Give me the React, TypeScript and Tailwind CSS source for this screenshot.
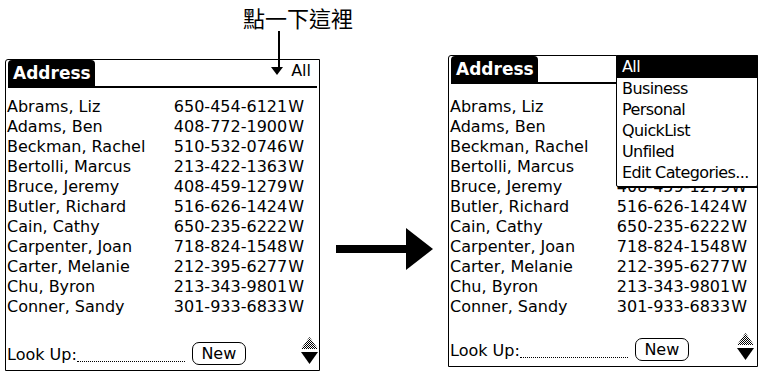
import React from 'react';

const contacts = [
  ['Abrams, Liz', '650-454-6121'],
  ['Adams, Ben', '408-772-1900'],
  ['Beckman, Rachel', '510-532-0746'],
  ['Bertolli, Marcus', '213-422-1363'],
  ['Bruce, Jeremy', '408-459-1279'],
  ['Butler, Richard', '516-626-1424'],
  ['Cain, Cathy', '650-235-6222'],
  ['Carpenter, Joan', '718-824-1548'],
  ['Carter, Melanie', '212-395-6277'],
  ['Chu, Byron', '213-343-9801'],
  ['Conner, Sandy', '301-933-6833'],
];

const categories = ['Business', 'Personal', 'QuickList', 'Unfiled', 'Edit Categories...'];

// up arrow greyed out (dithered), down arrow active
const ScrollArrows = ({ id }: { id: string }) => (
  <svg width="17" height="28" viewBox="0 0 17 28">
    <defs>
      <pattern id={id} width="2" height="2" patternUnits="userSpaceOnUse">
        <rect x="0" y="0" width="1" height="1" fill="#000" />
        <rect x="1" y="1" width="1" height="1" fill="#000" />
      </pattern>
    </defs>
    <polygon points="8.5,0 17,12 0,12" fill={`url(#${id})`} />
    <polygon points="0,15 17,15 8.5,27" fill="#000" />
  </svg>
);

type ScreenProps = {
  popup?: boolean;
  className: string;
  listPad: string;
  phonePad: string;
  footPad: string;
};

const Screen = ({ popup = false, className, listPad, phonePad, footPad }: ScreenProps) => (
  <div className={`relative flex flex-col h-[312px] shrink-0 border border-black rounded-tl-[3px] ${className}`}>
    {/* Title bar */}
    <div className="flex items-end h-[26px] px-[2px]">
      <div className="h-full w-[87px] bg-black rounded-t-[4px] pl-[5px] pt-[3px] text-white font-bold text-[17px] leading-[20px]">
        Address
      </div>
      {!popup && (
        <div className="ml-auto flex items-center gap-[8px] pr-[6px] pb-[6px]">
          <svg width="12" height="8" viewBox="0 0 12 8">
            <polygon points="0,0 12,0 6,8" fill="#000" />
          </svg>
          <span className="text-[16px] leading-[18px]">All</span>
        </div>
      )}
    </div>
    <div className="h-[2px] bg-black mx-[2px]" />

    {/* List */}
    <div className={`flex flex-col ${listPad}`}>
      {contacts.map(([name, phone], i) => (
        <div key={name} className={`flex justify-between h-[20px] leading-[20px] text-[16px] pl-[1px] ${phonePad}`}>
          <span>{name}</span>
          <span className={popup && i < 4 ? 'invisible' : ''}>
            {phone}
            <span className="ml-[1px]">W</span>
          </span>
        </div>
      ))}
    </div>

    {/* Footer */}
    <div className={`mt-auto flex items-end pl-[1px] pb-[5px] ${footPad}`}>
      <span className="text-[16px] leading-[20px]">Look Up:</span>
      <div className="w-[108px] mb-[3px] border-b border-dotted border-black" />
      <div className="ml-[7px] w-[54px] h-[23px] border-[1.5px] border-black rounded-[7px] flex items-center justify-center text-[16px] leading-none">
        New
      </div>
      <div className="ml-auto">
        <ScrollArrows id={popup ? 'ditherR' : 'ditherL'} />
      </div>
    </div>

    {/* Category popup */}
    {popup && (
      <div className="absolute left-[167px] top-[-1px] w-[142px] bg-white border border-black rounded-b-[2px] shadow-[1px_1px_0_#000] text-[16px] tracking-[-0.6px] whitespace-nowrap pb-[3px]">
        <div className="h-[22px] leading-[22px] bg-black text-white pl-[5px]">All</div>
        {categories.map((c) => (
          <div key={c} className="h-[21px] leading-[21px] pl-[5px]">
            {c}
          </div>
        ))}
      </div>
    )}
  </div>
);

export default function App() {
  return (
    <div className="relative w-[758px] h-[372px] overflow-hidden bg-white text-black font-['DejaVu_Sans',sans-serif]">
      {/* Caption */}
      <div className="h-[55px] pl-[243px] pt-[5px] text-[22px] leading-[24px] font-['Noto_Sans_CJK_TC',sans-serif]">
        點一下這裡
      </div>
      {/* pointer line to the category trigger */}
      <div className="absolute left-[278px] top-[31px] w-[2px] h-[40px] bg-black" />

      <div className="flex items-start">
        <Screen className="w-[315px] ml-[5px] mt-[4px]" listPad="pt-[9px]" phonePad="pr-[15px]" footPad="pr-[1px]" />
        <div className="w-[128px] shrink-0 pl-[16px] pt-[173px]">
          <svg width="97" height="42" viewBox="0 0 97 42">
            <rect x="0" y="17" width="72" height="8" fill="#000" />
            <polygon points="70,0 97,21 70,42" fill="#000" />
          </svg>
        </div>
        <Screen popup className="w-[310px]" listPad="pt-[13px]" phonePad="pr-[10px]" footPad="pr-[3px]" />
      </div>
    </div>
  );
}
